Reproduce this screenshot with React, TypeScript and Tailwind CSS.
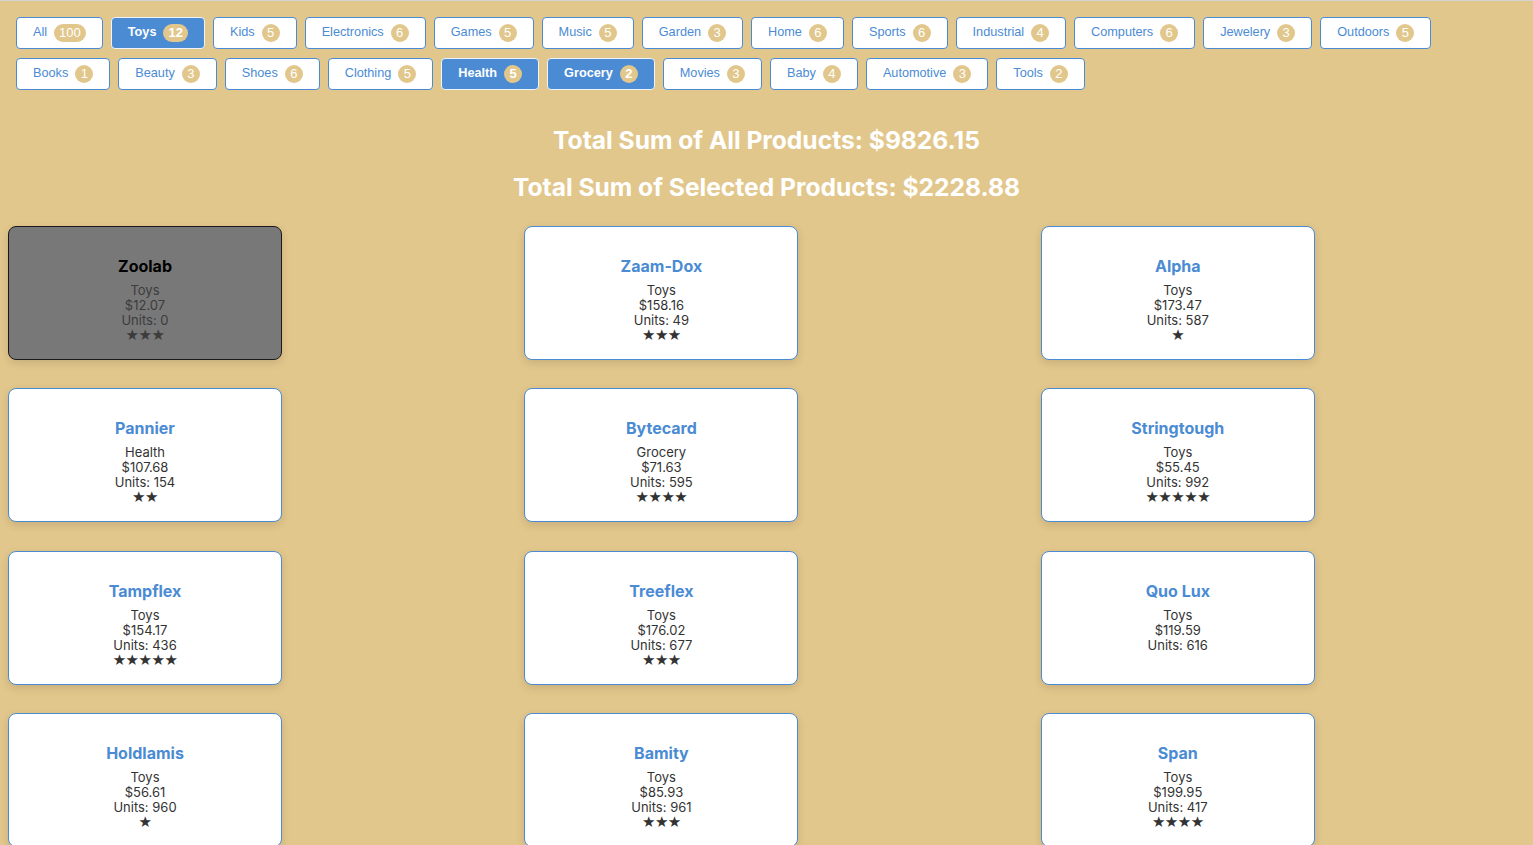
import React from "react";

type Category = { name: string; count: number; selected?: boolean };

const categories: Category[] = [
  {name: "All", count: 100},
  {name: "Toys", count: 12, selected: true},
  {name: "Kids", count: 5},
  {name: "Electronics", count: 6},
  {name: "Games", count: 5},
  {name: "Music", count: 5},
  {name: "Garden", count: 3},
  {name: "Home", count: 6},
  {name: "Sports", count: 6},
  {name: "Industrial", count: 4},
  {name: "Computers", count: 6},
  {name: "Jewelery", count: 3},
  {name: "Outdoors", count: 5},
  {name: "Books", count: 1},
  {name: "Beauty", count: 3},
  {name: "Shoes", count: 6},
  {name: "Clothing", count: 5},
  {name: "Health", count: 5, selected: true},
  {name: "Grocery", count: 2, selected: true},
  {name: "Movies", count: 3},
  {name: "Baby", count: 4},
  {name: "Automotive", count: 3},
  {name: "Tools", count: 2},
];

type Product = { name: string; category: string; price: string; units: number; rating: number; selected?: boolean };

const products: Product[] = [
  {name: "Zoolab", category: "Toys", price: "12.07", units: 0, rating: 3, selected: true},
  {name: "Zaam-Dox", category: "Toys", price: "158.16", units: 49, rating: 3},
  {name: "Alpha", category: "Toys", price: "173.47", units: 587, rating: 1},
  {name: "Pannier", category: "Health", price: "107.68", units: 154, rating: 2},
  {name: "Bytecard", category: "Grocery", price: "71.63", units: 595, rating: 4},
  {name: "Stringtough", category: "Toys", price: "55.45", units: 992, rating: 5},
  {name: "Tampflex", category: "Toys", price: "154.17", units: 436, rating: 5},
  {name: "Treeflex", category: "Toys", price: "176.02", units: 677, rating: 3},
  {name: "Quo Lux", category: "Toys", price: "119.59", units: 616, rating: 0},
  {name: "Holdlamis", category: "Toys", price: "56.61", units: 960, rating: 1},
  {name: "Bamity", category: "Toys", price: "85.93", units: 961, rating: 3},
  {name: "Span", category: "Toys", price: "199.95", units: 417, rating: 4},
];

const CategoryButton = ({category}: { category: Category }) => (
  <button
    type="button"
    className={`flex items-center gap-[7px] h-[32px] px-4 rounded-[4px] border text-[12.7px] font-['Liberation_Sans',Arial,sans-serif] ${
      category.selected
        ? "bg-[#4a8bd4] border-[#eef3fa] text-white font-bold"
        : "bg-white border-[#4a8bd4] text-[#4a8bd4]"
    }`}
  >
    <span>{category.name}</span>
    <span
      className={`h-[18px] min-w-[18px] px-[5px] rounded-full bg-[#e2c78c] text-white text-[13px] leading-[18px] text-center ${
        category.selected ? "font-bold" : ""
      }`}
    >
      {category.count}
    </span>
  </button>
);

const ProductCard = ({product}: { product: Product }) => (
  <div
    className={`h-[134px] rounded-lg border pt-[29px] text-center shadow-[0_3px_8px_rgba(0,0,0,0.12)] ${
      product.selected ? "bg-[#787878] border-[#1a1a1a]" : "bg-white border-[#4a8bd4]"
    }`}
  >
    <div className={`text-[16px] leading-[20px] font-bold ${product.selected ? "text-black" : "text-[#4a8bd4]"}`}>
      {product.name}
    </div>
    <div className={`mt-[7px] text-[13px] leading-[15px] ${product.selected ? "text-[#3c3c3c]" : "text-[#333]"}`}>
      <div>{product.category}</div>
      <div>${product.price}</div>
      <div>Units: {product.units}</div>
      <div className="text-[15px] leading-[15px] font-['DejaVu_Sans',sans-serif] tracking-[-0.5px]">
        {"★".repeat(product.rating)}
      </div>
    </div>
  </div>
);

const App = () => {
  return (
    <div className="min-h-screen bg-[#e2c78c] border-t border-[#d4d4d4] font-['Inter',sans-serif]">
      <div className="flex flex-wrap gap-x-2 gap-y-[9px] px-4 pt-4">
        {categories.map(category => (
          <CategoryButton key={category.name} category={category}/>
        ))}
      </div>

      <div className="mt-[34px] text-center text-white font-bold text-[24.6px] leading-[32px]">
        Total Sum of All Products: $9826.15
      </div>
      <div className="mt-[15px] text-center text-white font-bold text-[24.6px] leading-[32px]">
        Total Sum of Selected Products: $2228.88
      </div>

      <div className="mt-[23px] pl-2 grid grid-cols-[274px_274px_274px] gap-x-[242.4px] gap-y-[28.4px]">
        {products.map(product => (
          <ProductCard key={product.name} product={product}/>
        ))}
      </div>
    </div>
  );
};

export default App;
